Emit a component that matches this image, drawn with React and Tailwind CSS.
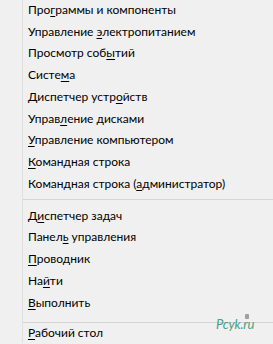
const GROUPS = [
  [
    ["Про", "г", "раммы и компоненты"],
    ["Управление ", "э", "лектропитанием"],
    ["Просмотр соб", "ы", "тий"],
    ["Систе", "м", "а"],
    ["Диспетчер устр", "о", "йств"],
    ["Управ", "л", "ение дисками"],
    ["", "У", "правление компьютером"],
    ["", "К", "омандная строка"],
    ["Командная строка (", "а", "дминистратор)"],
  ],
  [
    ["Д", "и", "спетчер задач"],
    ["Панел", "ь", " управления"],
    ["", "П", "роводник"],
    ["На", "й", "ти"],
    ["", "В", "ыполнить"],
  ],
  [["", "Р", "абочий стол"]],
];

const Item = ({ parts }) => (
  <div className="h-[21.75px] flex items-center pl-[5px] text-[12px] text-[#000]">
    <span>
      {parts[0]}
      <u className="underline-offset-[2px] decoration-1">{parts[1]}</u>
      {parts[2]}
    </span>
  </div>
);

export default function App() {
  return (
    <div className="relative w-[273px] h-[344px] overflow-hidden bg-[#f0f0f0] font-['Lato',sans-serif]">
      <div className="ml-[22px] h-full border-l border-[#e0e0e0] -mt-px">
        {GROUPS.map((group, gi) => (
          <div key={gi}>
            {gi === 1 && (
              <div className="h-[10px] flex items-center">
                <div className="w-full h-px bg-[#d5d5d5]" />
              </div>
            )}
            {gi === 2 && (
              <div className="h-[9px] flex items-end">
                <div className="w-full h-px bg-[#d5d5d5]" />
              </div>
            )}
            {group.map((parts, i) => (
              <Item key={i} parts={parts} />
            ))}
          </div>
        ))}
      </div>

      {/* watermark */}
      <div className="absolute left-[216px] top-[318px] text-[13px] leading-none italic text-[#46a083] tracking-[-0.2px]">
        Pcyk.ru
        <span className="absolute left-[29px] -top-[4px] w-[4px] h-[5px] rounded-[1px] bg-[#9aa3a0]" />
      </div>
    </div>
  );
}
